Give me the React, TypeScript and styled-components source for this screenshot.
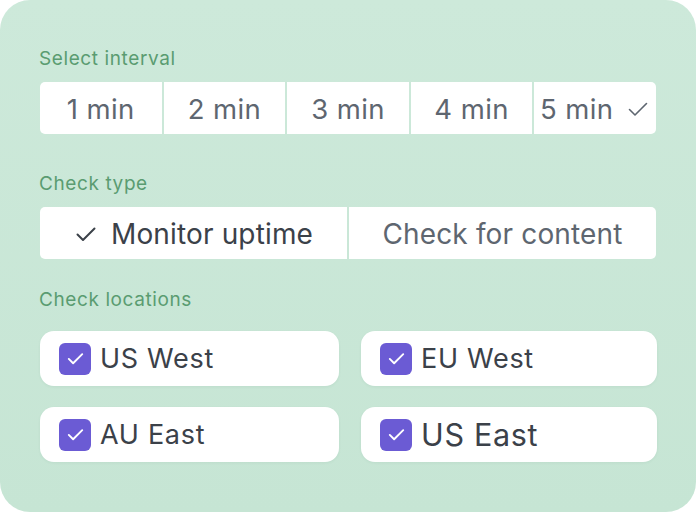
import React from "react";
import styled, { createGlobalStyle } from "styled-components";

const GlobalStyle = createGlobalStyle`
  html, body {
    margin: 0;
    padding: 0;
    background: #ffffff;
  }
  body {
    font-family: Inter, "Noto Sans", "Liberation Sans", sans-serif;
    -webkit-font-smoothing: antialiased;
  }
`;

const intervals = ["1 min", "2 min", "3 min", "4 min", "5 min"];
const locations = [
  { name: "US West", size: 27 },
  { name: "EU West", size: 27 },
  { name: "AU East", size: 27 },
  { name: "US East", size: 30.5 },
];

const CheckMark = ({ size, stroke }: { size: number; stroke: number }) => (
  <svg width={size} height={size} viewBox="0 0 24 24" fill="none">
    <path
      d="M3.5 12.5l5.5 5.5L20.5 6.5"
      stroke="currentColor"
      strokeWidth={stroke}
      strokeLinecap="round"
      strokeLinejoin="round"
    />
  </svg>
);

const App = () => {
  return (
    <>
      <GlobalStyle />
      <Card>
        <Label>Select interval</Label>
        <Segments $cols={5}>
          {intervals.map((item, i) => (
            <Segment key={item} $size={27.5} $spacing={0.4}>
              {item}
              {i === 4 && (
                <Tick $color="#5e6670">
                  <CheckMark size={24} stroke={1.6} />
                </Tick>
              )}
            </Segment>
          ))}
        </Segments>

        <Label $top={38}>Check type</Label>
        <Segments $cols={2}>
          <Segment $dark $size={28} $spacing={0.15}>
            <Tick $color="#3b4149">
              <CheckMark size={24} stroke={2} />
            </Tick>
            Monitor uptime
          </Segment>
          <Segment $size={28} $spacing={0.15}>
            Check for content
          </Segment>
        </Segments>

        <Label $top={29} $bottom={18}>
          Check locations
        </Label>
        <LocationGrid>
          {locations.map((loc) => (
            <Location key={loc.name} $size={loc.size}>
              <Checkbox>
                <CheckMark size={19} stroke={2.4} />
              </Checkbox>
              {loc.name}
            </Location>
          ))}
        </LocationGrid>
      </Card>
    </>
  );
};

export default App;

const Card = styled.div`
  width: 696px;
  height: 512px;
  box-sizing: border-box;
  padding: 47px 40px 0 40px;
  border-radius: 30px;
  background: linear-gradient(180deg, #cde9da 0%, #c6e5d4 100%);
  display: flex;
  flex-direction: column;
`;

const Label = styled.div<{ $top?: number; $bottom?: number }>`
  font-size: 19px;
  line-height: 24px;
  letter-spacing: 0.6px;
  color: #5a9c71;
  margin-top: ${(p) => p.$top ?? 0}px;
  margin-bottom: ${(p) => p.$bottom ?? 11}px;
  margin-left: -1px;
`;

const Segments = styled.div<{ $cols: number }>`
  display: grid;
  grid-template-columns: repeat(${(p) => p.$cols}, 1fr);
  gap: 2px;
  height: 52px;
  border-radius: 5px;
  overflow: hidden;
`;

const Segment = styled.div<{ $dark?: boolean; $size: number; $spacing: number }>`
  background: #ffffff;
  display: flex;
  align-items: center;
  justify-content: center;
  gap: 13px;
  font-size: ${(p) => p.$size}px;
  letter-spacing: ${(p) => p.$spacing}px;
  color: ${(p) => (p.$dark ? "#3b4149" : "#5e6670")};
  white-space: nowrap;
  padding-top: 1px;
`;

const Tick = styled.span<{ $color: string }>`
  display: inline-flex;
  color: ${(p) => p.$color};
`;

const LocationGrid = styled.div`
  display: grid;
  grid-template-columns: 299px 296px;
  column-gap: 22px;
  row-gap: 21px;
  margin-top: 1px;
`;

const Location = styled.div<{ $size: number }>`
  height: 55px;
  background: #ffffff;
  border-radius: 14px;
  box-shadow: 0 1px 3px rgba(40, 90, 60, 0.06);
  display: flex;
  align-items: center;
  gap: 9px;
  padding-left: 19px;
  font-size: ${(p) => p.$size}px;
  letter-spacing: 0.7px;
  color: #3b4149;
`;

const Checkbox = styled.span`
  width: 32px;
  height: 32px;
  border-radius: 6px;
  background: #6b5bd4;
  color: #ffffff;
  display: inline-flex;
  align-items: center;
  justify-content: center;
  flex-shrink: 0;
`;
